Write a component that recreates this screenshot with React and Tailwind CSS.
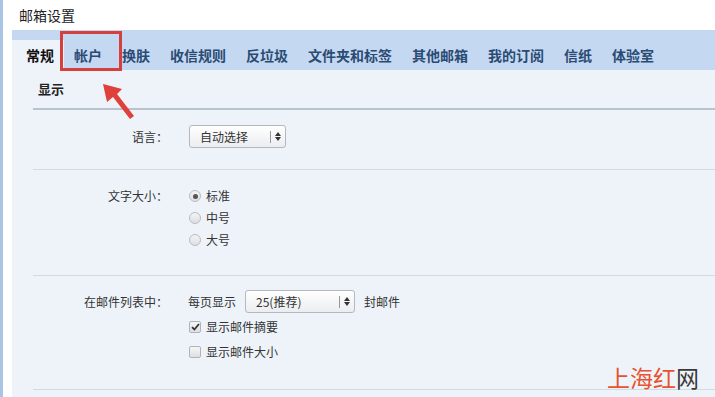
import React from 'react';

const tabs = ['常规', '帐户', '换肤', '收信规则', '反垃圾', '文件夹和标签', '其他邮箱', '我的订阅', '信纸', '体验室'];

const font = { fontFamily: '"Microsoft YaHei", "Noto Sans CJK SC", sans-serif' };

const SelectBox = ({ text, width }) => (
    <div
        className={`flex items-center h-[23px] rounded-[3px] border border-[#b4b9bf] bg-gradient-to-b from-[#ffffff] to-[#ebedf0] ${width}`}
    >
        <span className="flex-1 pl-[10px] text-[12px] text-[#333]">{text}</span>
        <span className="w-px h-[12px] bg-[#999]"></span>
        <span className="w-[14px] flex flex-col items-center justify-center gap-[1px]">
            <svg width="6" height="4" viewBox="0 0 6 4"><path d="M0 4 L3 0 L6 4 Z" fill="#333" /></svg>
            <svg width="6" height="4" viewBox="0 0 6 4"><path d="M0 0 L3 4 L6 0 Z" fill="#333" /></svg>
        </span>
    </div>
);

const Radio = ({ checked, label }) => (
    <div className="flex items-center h-[22px]">
        <span className="w-[12px] h-[12px] rounded-full border border-[#b8bcc2] bg-gradient-to-b from-[#f4f4f4] to-[#dcdfe3] flex items-center justify-center">
            {checked && <span className="w-[5px] h-[5px] rounded-full bg-[#555]"></span>}
        </span>
        <span className="ml-[5px] text-[12px] text-[#333]">{label}</span>
    </div>
);

const Checkbox = ({ checked, label }) => (
    <div className="flex items-center h-[25px]">
        <span className="w-[12px] h-[12px] rounded-[2px] border border-[#b0b4ba] bg-gradient-to-b from-[#f6f6f6] to-[#dcdfe3] flex items-center justify-center">
            {checked && (
                <svg width="9" height="8" viewBox="0 0 9 8">
                    <path d="M1 4.2 L3.4 6.5 L8 1" stroke="#333" strokeWidth="1.8" fill="none" />
                </svg>
            )}
        </span>
        <span className="ml-[5px] text-[12px] text-[#333]">{label}</span>
    </div>
);

const Row = ({ label, children, className, labelClass }) => (
    <div className={`flex border-b border-[#d3dae2] ${className}`}>
        <div className={`w-[156px] text-right text-[12px] text-[#333] pr-[21px] shrink-0 ${labelClass}`}>{label}</div>
        <div>{children}</div>
    </div>
);

const App = () => {
    return (
        <div className="relative w-[715px] h-[397px] overflow-hidden bg-white flex" style={font}>
            <div className="w-[3px] bg-[#aac4e4] shrink-0"></div>
            <div className="flex-1 flex flex-col">
                <div className="h-[30px] flex items-center pl-[16px] text-[14px] text-[#222]">邮箱设置</div>
                <div className="ml-[9px] flex-1 flex flex-col bg-[#eef3fa]">
                    <div className="h-[40px] bg-[#c4d9f1] flex items-end">
                        {tabs.map((tab, i) => (
                            <div
                                key={tab}
                                className={
                                    i === 0
                                        ? 'h-[30px] flex items-center pl-[14px] pr-[10px] bg-[#eef3fa] text-[14px] font-bold text-[#111]'
                                        : 'h-[30px] flex items-center px-[10px] text-[14px] font-bold text-[#2b4b74]'
                                }
                            >
                                {tab}
                            </div>
                        ))}
                    </div>
                    <div className="pl-[21px]">
                        <div className="h-[40px] border-b-2 border-[#b9c3cc] flex items-center pl-[5px] text-[13px] font-bold text-[#222]">
                            显示
                        </div>
                        <Row label="语言：" className="h-[60px] pt-[15px]" labelClass="leading-[23px]">
                            <SelectBox text="自动选择" width="w-[97px]" />
                        </Row>
                        <Row label="文字大小：" className="h-[106px] pt-[15px]" labelClass="leading-[20px] mt-[1px]">
                            <div className="flex flex-col">
                                <Radio checked label="标准" />
                                <Radio label="中号" />
                                <Radio label="大号" />
                            </div>
                        </Row>
                        <Row label="在邮件列表中：" className="h-[114px] pt-[14px]" labelClass="leading-[23px]">
                            <div className="flex flex-col">
                                <div className="flex items-center -ml-[1px]">
                                    <span className="text-[12px] text-[#333] mr-[9px]">每页显示</span>
                                    <SelectBox text="25(推荐)" width="w-[110px]" />
                                    <span className="text-[12px] text-[#333] ml-[9px]">封邮件</span>
                                </div>
                                <div className="mt-[1px]">
                                    <Checkbox checked label="显示邮件摘要" />
                                    <Checkbox label="显示邮件大小" />
                                </div>
                            </div>
                        </Row>
                    </div>
                </div>
            </div>

            <div className="absolute left-[60px] top-[31px] w-[62px] h-[40px] border-[3px] border-[#d6403c]"></div>

            <svg className="absolute left-[95px] top-[78px]" width="45" height="45" viewBox="0 0 45 45">
                <path d="M8 6 L27 11 L22 16 L39 38 L35 41 L18 19 L12 24 Z" fill="#e0403a" />
            </svg>

            <div className="absolute left-[607px] top-[362px] text-[23px] leading-[30px]" style={font}>
                <span className="text-[#e8522e]">上海红</span>
                <span className="text-[#3a3a3a]">网</span>
            </div>
        </div>
    );
};

export default App;
